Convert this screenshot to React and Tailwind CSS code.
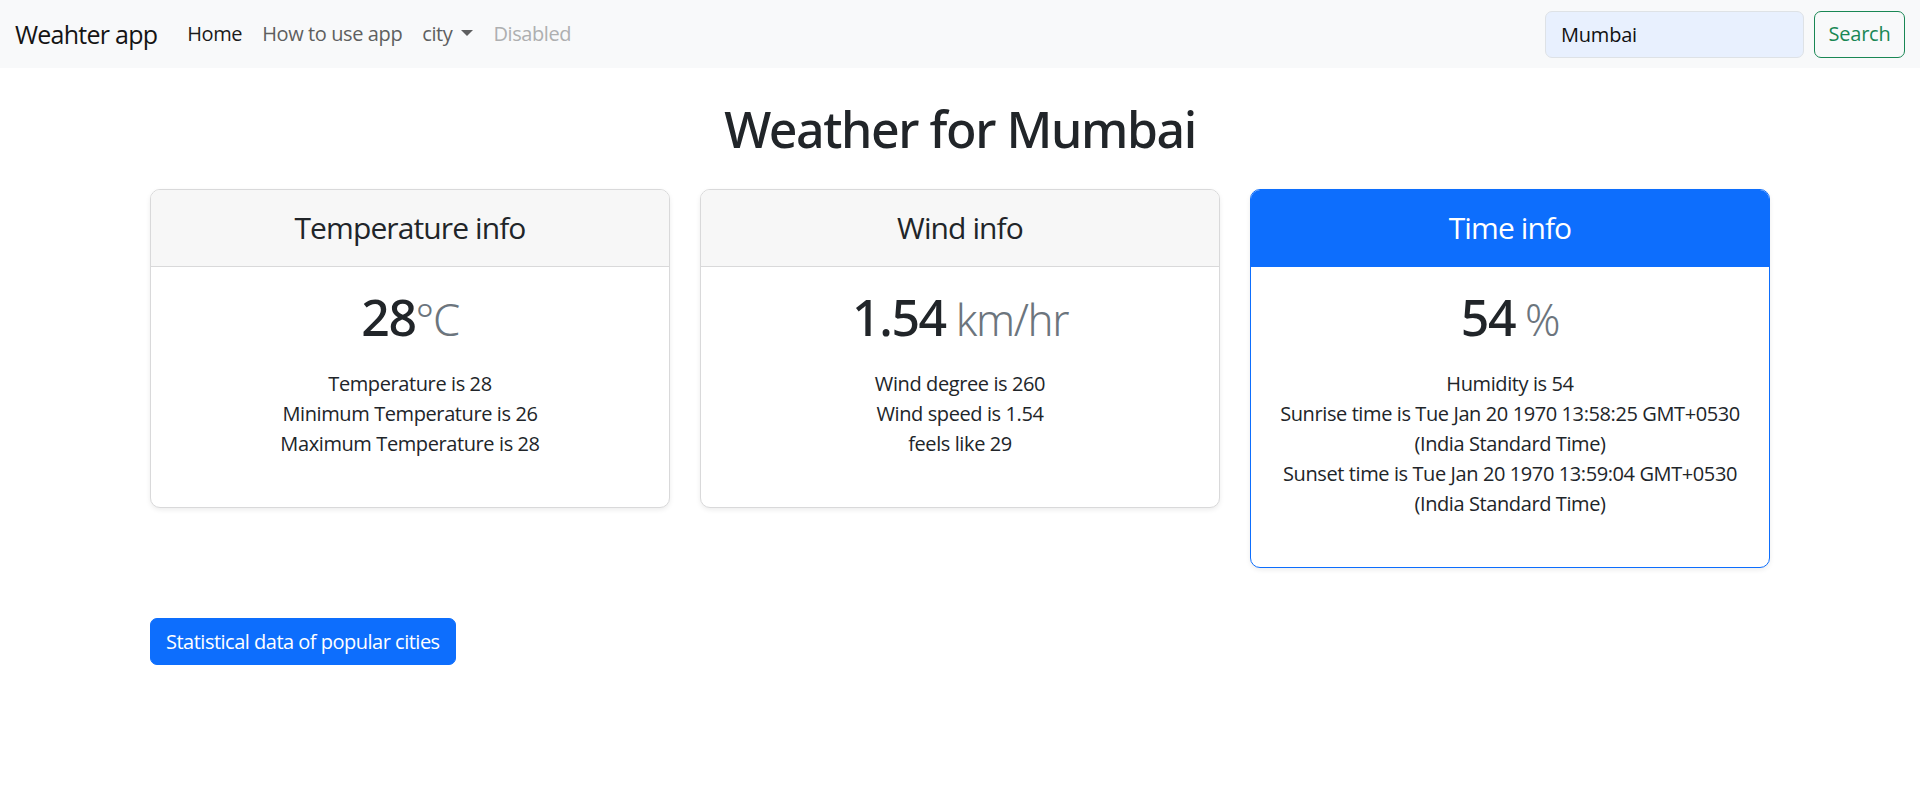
const cards = [
  {
    title: "Temperature info",
    value: "28",
    unit: "°C",
    lines: ["Temperature is 28", "Minimum Temperature is 26", "Maximum Temperature is 28"],
    primary: false,
  },
  {
    title: "Wind info",
    value: "1.54",
    unit: " km/hr",
    lines: ["Wind degree is 260", "Wind speed is 1.54", "feels like 29"],
    primary: false,
  },
  {
    title: "Time info",
    value: "54",
    unit: " %",
    lines: [
      "Humidity is 54",
      "Sunrise time is Tue Jan 20 1970 13:58:25 GMT+0530 (India Standard Time)",
      "Sunset time is Tue Jan 20 1970 13:59:04 GMT+0530 (India Standard Time)",
    ],
    primary: true,
  },
];

function Navbar() {
  return (
    <nav className="h-[68px] bg-[#f8f9fa] px-[15px] flex items-center justify-between">
      <div className="flex items-center">
        <a href="#" className="text-[25px] leading-[37px] tracking-[-0.03em] text-[#141414] mr-[20px]">
          Weahter app
        </a>
        <ul className="flex items-center text-[20px] leading-[30px] tracking-[-0.02em]">
          <li>
            <a href="#" className="block px-[10px] text-[#1b1b1b]">Home</a>
          </li>
          <li>
            <a href="#" className="block px-[10px] text-[#5e5f60]">How to use app</a>
          </li>
          <li>
            <a href="#" className="flex items-center px-[10px] text-[#5e5f60]">
              city
              {/* dropdown caret */}
              <span className="ml-[9px] mb-[2px] w-0 h-0 border-t-[6px] border-t-[#5e5f60] border-x-[6px] border-x-transparent" />
            </a>
          </li>
          <li>
            <span className="block px-[10px] text-[#aeafb0]">Disabled</span>
          </li>
        </ul>
      </div>

      <form className="flex items-center" onSubmit={(e) => e.preventDefault()}>
        <input
          type="search"
          defaultValue="Mumbai"
          className="w-[259px] h-[47px] mr-[10px] px-[15px] text-[20px] text-[#111] bg-[#e8f0fe] border border-[#dee2e6] rounded-[7px] outline-none"
        />
        <button
          type="submit"
          className="w-[91px] h-[47px] text-[20px] text-[#198754] border border-[#198754] rounded-[7px] bg-transparent"
        >
          Search
        </button>
      </form>
    </nav>
  );
}

function InfoCard({ card }) {
  return (
    <div
      className={`rounded-[10px] border bg-white overflow-hidden shadow-[0_2px_5px_rgba(0,0,0,0.075)] ${
        card.primary ? "border-[#0d6efd]" : "border-[#d9d9da]"
      }`}
    >
      <div
        className={`py-[20px] text-[30px] leading-[36px] tracking-[-0.03em] border-b ${
          card.primary ? "bg-[#0d6efd] text-white border-[#0d6efd]" : "bg-[#f7f7f7] text-[#212529] border-[#d9d9da]"
        }`}
      >
        {card.title}
      </div>
      <div className="p-[20px]">
        <h1 className="font-['Noto_Sans',sans-serif] text-[50px] leading-[60px] font-medium tracking-[-0.028em] text-[#212529]">
          {card.value}
          <small className="text-[0.875em] font-light text-[#6c757d]">{card.unit}</small>
        </h1>
        <ul className="mt-[20px] mb-[28px] text-[20px] leading-[30px] tracking-[-0.02em] text-[#212529]">
          {card.lines.map((line) => (
            <li key={line}>{line}</li>
          ))}
        </ul>
      </div>
    </div>
  );
}

export default function App() {
  return (
    <div className="min-h-screen bg-white font-['Open_Sans','Noto_Sans',sans-serif] tracking-[-0.0125em] text-[#212529]">
      <Navbar />

      <main className="w-[1650px] mx-auto px-[15px]">
        <h1 className="mt-[31px] mb-[30px] text-center font-['Noto_Sans',sans-serif] text-[50px] leading-[60px] font-medium tracking-[-0.028em] text-[#212529]">
          Weather for Mumbai
        </h1>

        <div className="grid grid-cols-3 gap-[30px] items-start text-center">
          {cards.map((card) => (
            <InfoCard key={card.title} card={card} />
          ))}
        </div>

        <button className="mt-[50px] px-[15px] h-[47px] text-[20px] tracking-[-0.025em] text-white bg-[#0d6efd] border border-[#0d6efd] rounded-[7px]">
          Statistical data of popular cities
        </button>
      </main>
    </div>
  );
}
